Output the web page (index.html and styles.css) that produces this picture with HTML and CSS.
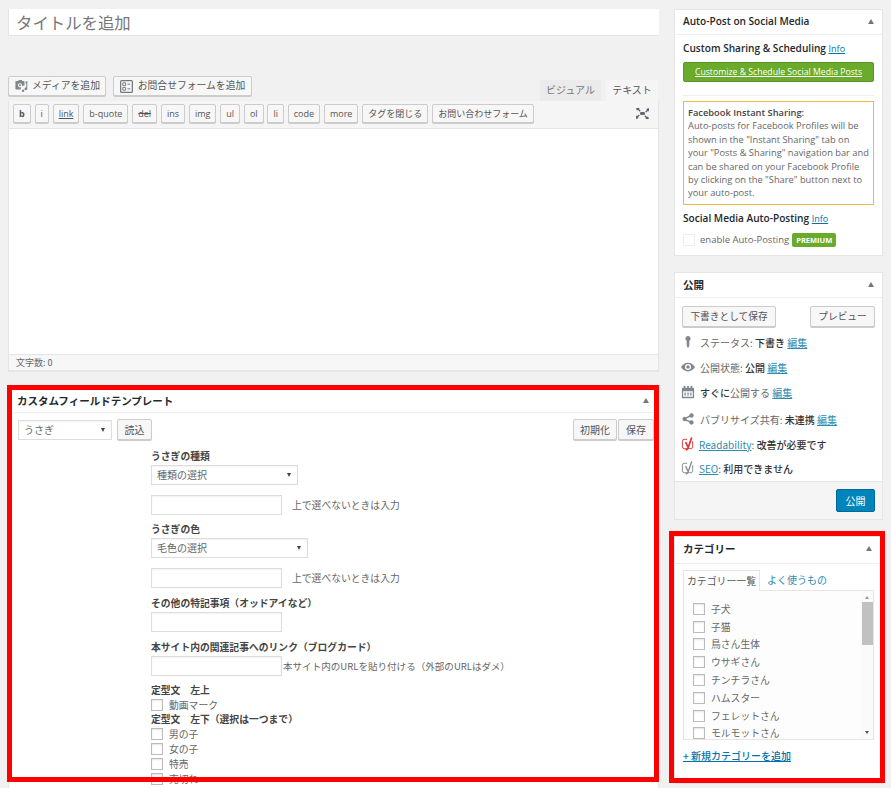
FILE: index.html
```html
<!DOCTYPE html>
<html lang="ja">
<head>
<meta charset="utf-8">
<title>投稿を編集</title>
<link rel="stylesheet" href="styles.css">
</head>
<body>
<div class="page">
  <main class="main">
    <div class="title-input">タイトルを追加</div>
    <div class="editor-top">
      <div class="media-buttons">
        <button class="btn media-btn"><svg class="mi" viewBox="0 0 20 20"><path fill="#82878c" d="M3 3h3l1-1.500h4L12 3h2c.6 0 1 .4 1 1v5.500a4 4 0 0 0-3.500 1.200V9a3 3 0 1 0-3 3c.6 0 1.200-.2 1.700-.5L9.500 15H3c-.6 0-1-.4-1-1V4c0-.6.4-1 1-1zm5.500 4.500a1.500 1.500 0 1 1 0 3 1.500 1.500 0 0 1 0-3zM19 3v11a2 2 0 1 1-1.500-1.900V6.500l-1 .3V3.800zM13 18.500a1.700 1.700 0 1 1 0-3.400 1.700 1.700 0 0 1 0 3.400z"/></svg>メディアを追加</button>
        <button class="btn media-btn form-btn"><svg class="fi" viewBox="0 0 14 14"><rect x=".7" y=".7" width="12.600" height="12.600" rx="1" fill="none" stroke="#72777c" stroke-width="1.300"/><path fill="none" stroke="#72777c" d="M3 3h3v3H3zM8 4.500h3M3 8h3v3H3zM8 9.500h3"/></svg>お問合せフォームを追加</button>
      </div>
      <div class="tabs">
        <span class="tab">ビジュアル</span>
        <span class="tab tab-on">テキスト</span>
      </div>
    </div>
    <div class="editor">
      <div class="toolbar">
        <button class="btn tb b">b</button>
        <button class="btn tb">i</button>
        <button class="btn tb u">link</button>
        <button class="btn tb">b-quote</button>
        <button class="btn tb s">del</button>
        <button class="btn tb">ins</button>
        <button class="btn tb">img</button>
        <button class="btn tb">ul</button>
        <button class="btn tb">ol</button>
        <button class="btn tb">li</button>
        <button class="btn tb">code</button>
        <button class="btn tb">more</button>
        <button class="btn tb">タグを閉じる</button>
        <button class="btn tb">お問い合わせフォーム</button>
        <svg class="fullscreen" viewBox="0 0 14 12"><path fill="#555d66" d="M0 0h4L3 1l2 2-1 1-2-2-1 1zM14 0v4l-1-1-2 2-1-1 2-2-1-1zM0 12V8l1 1 2-2 1 1-2 2 1 1zM14 12h-4l1-1-2-2 1-1 2 2 1-1z"/><rect x="4.500" y="4.500" width="5" height="3" fill="#555d66"/></svg>
      </div>
      <div class="editor-body"></div>
      <div class="editor-status">文字数: 0</div>
    </div>

    <section class="box cft">
      <header class="box-head"><h2>カスタムフィールドテンプレート</h2><i class="arrow"></i></header>
      <div class="cft-body">
        <div class="cft-bar">
          <span class="select sel-main">うさぎ<i class="caret"></i></span>
          <button class="btn load-btn">読込</button>
          <span class="spacer"></span>
          <button class="btn bar-btn">初期化</button>
          <button class="btn bar-btn save-btn">保存</button>
        </div>
        <div class="fields">
          <div class="label l1">うさぎの種類</div>
          <span class="select sel-a">種類の選択<i class="caret"></i></span>
          <div class="input-row r1"><span class="input"></span><span class="hint">上で選べないときは入力</span></div>
          <div class="label l2">うさぎの色</div>
          <span class="select sel-b">毛色の選択<i class="caret"></i></span>
          <div class="input-row r1"><span class="input"></span><span class="hint">上で選べないときは入力</span></div>
          <div class="label l3">その他の特記事項（オッドアイなど）</div>
          <span class="input block"></span>
          <div class="label l3">本サイト内の関連記事へのリンク（ブログカード）</div>
          <div class="input-row"><span class="input"></span><span class="hint tight">本サイト内のURLを貼り付ける（外部のURLはダメ）</span></div>
          <div class="label l4">定型文　左上</div>
          <label class="cb-row"><i class="cb"></i>動画マーク</label>
          <div class="label l5">定型文　左下（選択は一つまで）</div>
          <label class="cb-row"><i class="cb"></i>男の子</label>
          <label class="cb-row"><i class="cb"></i>女の子</label>
          <label class="cb-row"><i class="cb"></i>特売</label>
          <label class="cb-row"><i class="cb"></i>売切れ</label>
        </div>
      </div>
      <div class="red-frame"></div>
    </section>
  </main>

  <aside class="side">
    <section class="box social">
      <header class="box-head"><h2 class="en">Auto-Post on Social Media</h2><i class="arrow"></i></header>
      <div class="social-body">
        <div class="sub-title">Custom Sharing &amp; Scheduling <a href="#">Info</a></div>
        <a class="green" href="#">Customize &amp; Schedule Social Media Posts</a>
        <hr class="sep">
        <div class="notice"><span class="notice-title">Facebook Instant Sharing:</span><br>Auto-posts for Facebook Profiles will be shown in the "Instant Sharing" tab on your "Posts &amp; Sharing" navigation bar and can be shared on your Facebook Profile by clicking on the "Share" button next to your auto-post.</div>
        <div class="sub-title second">Social Media Auto-Posting <a href="#">Info</a></div>
        <div class="enable"><i class="cb cb-light"></i><span>enable Auto-Posting</span><span class="premium">PREMIUM</span></div>
      </div>
    </section>

    <section class="box publish">
      <header class="box-head"><h2>公開</h2><i class="arrow"></i></header>
      <div class="pub-actions">
        <button class="btn pub-btn">下書きとして保存</button>
        <button class="btn pub-btn">プレビュー</button>
      </div>
      <ul class="pub-list">
        <li class="p1"><svg class="pi" viewBox="0 0 16 16"><path fill="#82878c" d="M8 1a3 3 0 0 1 1.500 5.600V12l-1.500 3-1.500-3V6.600A3 3 0 0 1 8 1z"/></svg><span>ステータス: <b>下書き</b> <a href="#">編集</a></span></li>
        <li class="p2"><svg class="pi" viewBox="0 0 16 16"><path fill="#82878c" fill-rule="evenodd" d="M8 3c3.500 0 6.500 2.300 8 5-1.500 2.700-4.500 5-8 5S1.500 10.700 0 8c1.500-2.700 4.500-5 8-5zm0 1.500a3.500 3.500 0 1 0 0 7 3.500 3.500 0 0 0 0-7zM8 6a2 2 0 1 1 0 4 2 2 0 0 1 0-4z"/></svg><span>公開状態: <b>公開</b> <a href="#">編集</a></span></li>
        <li class="p3"><svg class="pi" viewBox="0 0 16 16"><path fill="#82878c" fill-rule="evenodd" d="M3 1h2v2H3zM7 1h2v2H7zM11 1h2v2h-2zM2 3h12a1 1 0 0 1 1 1v10a1 1 0 0 1-1 1H2a1 1 0 0 1-1-1V4a1 1 0 0 1 1-1zm.5 4v6.500h11V7zM4 8.500h1.500V12H4zM7.300 8.500h1.500V12H7.300zM10.500 8.500H12V12h-1.500z"/></svg><span><b>すぐに</b>公開する <a href="#">編集</a></span></li>
        <li class="p4"><svg class="pi" viewBox="0 0 16 16"><path fill="#82878c" d="M12 1.500a2.500 2.500 0 1 1-1.900 4.100L6.400 7.500a2.500 2.500 0 0 1 0 1l3.700 1.900A2.500 2.500 0 1 1 9.500 12L5.700 10a2.500 2.500 0 1 1 0-4l3.800-2A2.500 2.500 0 0 1 12 1.500z"/></svg><span>パブリサイズ共有: <b>未連携</b> <a href="#">編集</a></span></li>
        <li class="p5"><svg class="pi yo" viewBox="0 0 14 15"><path fill="none" stroke="#dc3232" d="M6 2.500H3a2 2 0 0 0-2 2v6a2 2 0 0 0 2 2h7a2 2 0 0 0 2-2V4.500"/><path fill="none" stroke="#dc3232" stroke-width="1.800" d="M4.500 5.500 7 11M11 .5 7 12c-.4 1-1.200 1.700-2.500 2"/></svg><span><a href="#">Readability</a>: <b>改善が必要です</b></span></li>
        <li class="p6"><svg class="pi yo" viewBox="0 0 14 15"><path fill="none" stroke="#82878c" d="M6 2.500H3a2 2 0 0 0-2 2v6a2 2 0 0 0 2 2h7a2 2 0 0 0 2-2V4.500"/><path fill="none" stroke="#82878c" stroke-width="1.400" d="M4.500 5.500 7 11M11 .5 7 12c-.4 1-1.200 1.700-2.500 2"/></svg><span><a href="#">SEO</a>: <b>利用できません</b></span></li>
      </ul>
      <footer class="pub-foot"><button class="primary">公開</button></footer>
    </section>

    <section class="box cat">
      <header class="box-head"><h2>カテゴリー</h2><i class="arrow"></i></header>
      <div class="cat-body">
        <div class="cat-tabs"><span class="cat-tab">カテゴリー一覧</span><a class="cat-pop" href="#">よく使うもの</a></div>
        <div class="cat-list">
          <ul>
            <li><i class="cb"></i>子犬</li>
            <li><i class="cb"></i>子猫</li>
            <li><i class="cb"></i>鳥さん生体</li>
            <li><i class="cb"></i>ウサギさん</li>
            <li><i class="cb"></i>チンチラさん</li>
            <li><i class="cb"></i>ハムスター</li>
            <li><i class="cb"></i>フェレットさん</li>
            <li><i class="cb"></i>モルモットさん</li>
          </ul>
          <div class="scrollbar"><i class="sb-up"></i><i class="sb-thumb"></i><i class="sb-down"></i></div>
        </div>
        <a class="add-cat" href="#">+ 新規カテゴリーを追加</a>
      </div>
      <div class="red-frame red-cat"></div>
    </section>
  </aside>
</div>
</body>
</html>
```

FILE: styles.css
```css
* { box-sizing: border-box; }
html, body { margin: 0; padding: 0; height: 788px; overflow: hidden; }
body {
  background: #f1f1f1;
  color: #444;
  font-family: "Noto Sans CJK JP", "Open Sans", sans-serif;
  font-size: 10px;
}
a { color: #0073aa; }
ul { list-style: none; margin: 0; padding: 0; }
button { font-family: inherit; margin: 0; white-space: nowrap; }
i { display: block; font-style: normal; }

.page { display: flex; align-items: flex-start; gap: 15px; padding: 9px 8px 0; height: 788px; overflow: hidden; }
.main { width: 651px; flex: none; }
.side { width: 209px; flex: none; }

.btn {
  display: inline-flex; align-items: center; justify-content: center;
  background: #f7f7f7; border: 1px solid #ccc; border-radius: 2px;
  box-shadow: 0 1px 0 #ccc; color: #555; font-size: 10px; line-height: 1; padding: 0; height: 20px;
}

.title-input {
  background: #fff; height: 27px; padding: 0 7px; font-size: 16.400px; line-height: 26px; color: #777;
  border: 1px solid #e4e4e4; border-width: 0 0 1px 1px;
}

.editor-top { display: flex; justify-content: space-between; align-items: flex-end; height: 65px; }
.media-buttons { display: flex; gap: 7px; padding-bottom: 5px; }
.media-btn { width: 98px; height: 20px; gap: 4px; font-size: 9.800px; }
.form-btn { width: 139px; }
.mi { width: 14px; height: 14px; }
.fi { width: 13px; height: 13px; margin-right: 1px; }
.tabs { display: flex; gap: 5px; padding-right: 1px; }
.tab { width: 61px; height: 21px; background: #ebebeb; color: #777; font-size: 10px; line-height: 20px; text-align: center; }
.tab-on { width: 52px; background: #f5f5f5; color: #555; }

.editor { border: 1px solid #e5e5e5; border-top: 0; border-bottom: 0; box-shadow: 0 1px 1px rgba(0,0,0,.04); }
.toolbar {
  display: flex; align-items: center; gap: 3.850px; height: 28px; padding: 0 0 2px 4px;
  background: #f5f5f5; border-bottom: 1px solid #e5e5e5;
}
.tb { height: 19px; padding: 0 5px; font-size: 9px; font-family: "Open Sans", "Noto Sans CJK JP", sans-serif; }
.tb.b { font-weight: 700; }
.tb.u { text-decoration: underline; }
.tb.s { text-decoration: line-through; }
.fullscreen { width: 13px; height: 11px; margin-left: auto; margin-right: 9px; }
.editor-body { background: #fff; height: 225px; }
.editor-status { background: #f7f7f7; height: 17px; padding-left: 7px; font-size: 9px; line-height: 16px; color: #666; border-top: 1px solid #e5e5e5; border-bottom: 1px solid #e5e5e5; }

.box { position: relative; background: #fff; border: 1px solid #e5e5e5; }
.box-head { display: flex; align-items: center; justify-content: space-between; padding: 0 8px 2px; border-bottom: 1px solid #eee; }
.box-head h2 { margin: 0; font-size: 10.500px; font-weight: 700; color: #23282d; }
.box-head h2.en { font-family: "Open Sans", sans-serif; font-weight: 600; font-size: 10.100px; }
.arrow { width: 0; height: 0; border: 3px solid transparent; border-top: 0; border-bottom: 5px solid #72777c; }

.red-frame { position: absolute; left: -2px; top: -1px; right: -1px; height: 397px; border: 5px solid #f00; pointer-events: none; }

.cft { margin-top: 14px; height: 410px; overflow: visible; }
.cft .box-head { height: 27px; padding: 3px 8px 0 8px; }
.cft .box-head .arrow { margin-right: 1px; }
.cft-body { position: relative; height: 375px; overflow: hidden; }
.cft-bar { display: flex; align-items: center; gap: 5px; padding: 6px 4px 0 9px; }
.spacer { flex: 1; }
.select {
  position: relative; display: block; background: #fff; border: 1px solid #ddd; height: 20px;
  padding-left: 5px; font-size: 10px; line-height: 18px; color: #666; box-shadow: inset 0 1px 2px rgba(0,0,0,.05);
}
.caret { position: absolute; right: 6px; top: 7px; width: 0; height: 0; border: 2.500px solid transparent; border-bottom: 0; border-top: 4px solid #444; }
.sel-main { width: 94px; }
.load-btn { width: 35px; height: 21px; }
.bar-btn { width: 44px; height: 21px; }
.save-btn { width: 36px; margin-left: -4px; }

.fields { padding: 10px 0 0 142px; }
.label { font-size: 9.800px; font-weight: 700; color: #444; line-height: 13px; }
.l2 { margin-top: 8px; }
.l3 { margin-top: 9px; margin-bottom: 2px; }
.l4 { margin-top: 8px; }
.l5 { margin-top: 1px; }
.label + .select { margin-top: 2px; }
.sel-a { width: 147px; }
.sel-b { width: 157px; }
.input { display: block; flex: none; width: 131px; height: 20px; background: #fff; border: 1px solid #ddd; box-shadow: inset 0 1px 2px rgba(0,0,0,.05); }
.input-row { display: flex; align-items: center; }
.r1 { margin-top: 10px; }
.hint { margin-left: 10px; font-size: 9.800px; color: #666; }
.hint.tight { margin-left: 1px; font-size: 9.550px; }
.cb { flex: none; width: 12px; height: 12px; background: #fff; border: 1px solid #bbb; box-shadow: inset 0 1px 2px rgba(0,0,0,.1); }
.cb-row { display: flex; align-items: center; gap: 6px; height: 15px; font-size: 9.800px; color: #666; }

.social { height: 247px; }
.social .box-head { height: 25px; }
.social-body { padding: 6px 8px 0; font-family: "Open Sans", sans-serif; }
.sub-title { font-size: 10.100px; font-weight: 600; color: #23282d; line-height: 15px; }
.sub-title a { font-size: 9px; font-weight: 400; }
.second { margin-top: 6px; }
.green {
  display: block; height: 20px; margin-top: 6px; background: #6aab2c; border: 1px solid #5d9628; border-radius: 2px;
  color: #fff; font-size: 8.700px; line-height: 18px; text-align: center;
}
.sep { height: 1px; margin: 13px 0 5px; border: 0; background: #eee; }
.notice { height: 104px; padding: 4px 2px 0 4px; border: 1px solid #f0b849; font-size: 9.300px; line-height: 13.400px; color: #666; }
.notice-title { font-weight: 600; color: #444; }
.enable { display: flex; align-items: center; height: 15px; margin-top: 6px; font-size: 9.500px; color: #666; }
.cb-light { margin: 0 5px 0 0; border-color: #eee; box-shadow: none; }
.premium { height: 14px; padding: 0 4px; margin-left: 3px; background: #6aab2c; border-radius: 2px; color: #fff; font-size: 7.500px; font-weight: 700; line-height: 14px; }

.publish { margin-top: 16px; height: 248px; }
.publish .box-head { height: 25px; }
.pub-actions { display: flex; justify-content: space-between; padding: 8px 7px 0; }
.pub-btn { height: 21px; padding: 0; font-size: 9.700px; }
.pub-btn:first-child { width: 94px; }
.pub-btn:last-child { width: 65px; }
.pub-list li { display: flex; align-items: center; height: 16px; font-size: 10px; color: #666; padding-left: 6px; }
.pub-list b { color: #333; font-weight: 500; }
.pub-list a { color: #2e8bb0; }
.pi { width: 14px; height: 14px; margin-right: 5px; flex: none; }
.yo { margin-right: 4px; }
.p1 { margin-top: 7px; }
.p2 { margin-top: 9px; }
.p3 { margin-top: 9px; }
.p4 { margin-top: 11px; }
.p5 { margin-top: 9px; }
.p6 { margin-top: 8px; }
.pub-foot { display: flex; justify-content: flex-end; height: 38px; margin-top: 5px; padding: 7px 7px 0; background: #f5f5f5; border-top: 1px solid #e5e5e5; }
.primary { width: 39px; height: 23px; padding: 0; background: #0085ba; border: 1px solid #006799; border-radius: 2px; color: #fff; font-size: 10px; }

.cat { margin-top: 16px; height: 248px; }
.cat .box-head { height: 27px; padding: 0 10px 4px 8px; }
.cat-body { padding: 6px 8px 0 8px; }
.cat-tabs { display: flex; align-items: flex-end; height: 20px; }
.cat-tab { position: relative; top: 1px; width: 77px; height: 21px; background: #fdfdfd; border: 1px solid #e5e5e5; border-bottom: 0; text-align: center; font-size: 9.900px; line-height: 20px; color: #555; z-index: 1; }
.cat-pop { padding-left: 7px; font-size: 10px; line-height: 20px; text-decoration: none; color: #2e8bb0; }
.cat-list { position: relative; height: 150px; border: 1px solid #e5e5e5; background: #fdfdfd; overflow: hidden; }
.cat-list ul { padding: 9px 0 0 9px; }
.cat-list li { display: flex; align-items: center; gap: 6px; height: 17.800px; font-size: 9.800px; color: #666; }
.scrollbar { position: absolute; right: 0; top: 0; bottom: 0; width: 12px; background: #fafafa; display: flex; flex-direction: column; align-items: center; }
.sb-up { margin-top: 5px; width: 0; height: 0; border: 2.500px solid transparent; border-top: 0; border-bottom: 3px solid #999; }
.sb-thumb { width: 11px; height: 43px; margin-top: 3px; background: #c1c1c1; }
.sb-down { margin-top: auto; margin-bottom: 5px; width: 0; height: 0; border: 2.500px solid transparent; border-bottom: 0; border-top: 3px solid #555; }
.add-cat { display: block; margin-top: 8px; font-size: 10px; font-weight: 500; color: #0073aa; }
.red-cat { left: -6px; top: -6px; right: -3px; height: 252px; }
```
